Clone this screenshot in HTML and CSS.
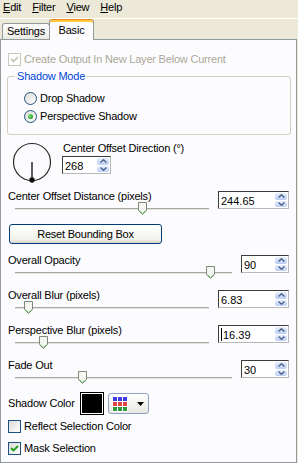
FILE: index.html
```html
<!DOCTYPE html>
<html>
<head>
<meta charset="utf-8">
<link rel="stylesheet" href="styles.css">
</head>
<body>
<div class="menubar">
  <span class="menu"><u>E</u>dit</span>
  <span class="menu"><u>F</u>ilter</span>
  <span class="menu"><u>V</u>iew</span>
  <span class="menu"><u>H</u>elp</span>
</div>
<div class="tabs">
  <div class="tab">Settings</div>
  <div class="tab active">Basic</div>
</div>
<div class="panel">
  <div class="check top disabled">
    <span class="box"><svg width="11" height="11" viewBox="0 0 11 11"><polyline points="2,5 4.5,7.5 9,3" fill="none" stroke="#CAC8BB" stroke-width="1.8"/></svg></span>
    <span>Create Output In New Layer Below Current</span>
  </div>
  <fieldset class="group">
    <legend>Shadow Mode</legend>
    <div class="radio"><span class="circle"></span><span>Drop Shadow</span></div>
    <div class="radio"><span class="circle on"></span><span>Perspective Shadow</span></div>
  </fieldset>
  <div class="dial-row">
    <svg class="dial" width="44" height="44" viewBox="0 0 44 44">
      <circle cx="22" cy="21" r="18.5" fill="none" stroke="#2a2a2a" stroke-width="1.2"/>
      <line x1="22" y1="21" x2="22" y2="39" stroke="#1a1a1a" stroke-width="1.4"/>
      <circle cx="22" cy="39" r="2.7" fill="#111"/>
    </svg>
    <div class="dial-ctl">
      <div class="label">Center Offset Direction (°)</div>
      <div class="spin dialspin">
        <span class="field">268</span>
        <span class="arrows">
          <span class="arrow"><svg width="7" height="4" viewBox="0 0 7 4"><polyline points="0.5,3.5 3.5,0.8 6.5,3.5" fill="none" stroke="#4D6185" stroke-width="1.4"/></svg></span>
          <span class="arrow"><svg width="7" height="4" viewBox="0 0 7 4"><polyline points="0.5,0.5 3.5,3.2 6.5,0.5" fill="none" stroke="#4D6185" stroke-width="1.4"/></svg></span>
        </span>
      </div>
    </div>
  </div>

  <div class="param first">
    <div class="param-main">
      <div class="label">Center Offset Distance (pixels)</div>
      <div class="slider"><div class="track"></div><svg class="thumb" style="left:123px" width="9" height="13" viewBox="0 0 9 13"><path d="M0.5 0.5H8.5V8.5L4.5 12.5L0.5 8.5Z" fill="#F6F6F2" stroke="#7D8A78"/><path d="M1.5 8.8L4.5 11.6L7.5 8.8" fill="none" stroke="#6CC16C"/></svg></div>
    </div>
    <div class="spin wide">
      <span class="field">244.65</span>
      <span class="arrows">
        <span class="arrow"><svg width="7" height="4" viewBox="0 0 7 4"><polyline points="0.5,3.5 3.5,0.8 6.5,3.5" fill="none" stroke="#4D6185" stroke-width="1.4"/></svg></span>
        <span class="arrow"><svg width="7" height="4" viewBox="0 0 7 4"><polyline points="0.5,0.5 3.5,3.2 6.5,0.5" fill="none" stroke="#4D6185" stroke-width="1.4"/></svg></span>
      </span>
    </div>
  </div>

  <button class="btn">Reset Bounding Box</button>

  <div class="param opacity">
    <div class="param-main">
      <div class="label">Overall Opacity</div>
      <div class="slider"><div class="track"></div><svg class="thumb" style="left:191px" width="9" height="13" viewBox="0 0 9 13"><path d="M0.5 0.5H8.5V8.5L4.5 12.5L0.5 8.5Z" fill="#F6F6F2" stroke="#7D8A78"/><path d="M1.5 8.8L4.5 11.6L7.5 8.8" fill="none" stroke="#6CC16C"/></svg></div>
    </div>
    <div class="spin narrow">
      <span class="field">90</span>
      <span class="arrows">
        <span class="arrow"><svg width="7" height="4" viewBox="0 0 7 4"><polyline points="0.5,3.5 3.5,0.8 6.5,3.5" fill="none" stroke="#4D6185" stroke-width="1.4"/></svg></span>
        <span class="arrow"><svg width="7" height="4" viewBox="0 0 7 4"><polyline points="0.5,0.5 3.5,3.2 6.5,0.5" fill="none" stroke="#4D6185" stroke-width="1.4"/></svg></span>
      </span>
    </div>
  </div>

  <div class="param">
    <div class="param-main">
      <div class="label">Overall Blur (pixels)</div>
      <div class="slider"><div class="track"></div><svg class="thumb" style="left:9px" width="9" height="13" viewBox="0 0 9 13"><path d="M0.5 0.5H8.5V8.5L4.5 12.5L0.5 8.5Z" fill="#F6F6F2" stroke="#7D8A78"/><path d="M1.5 8.8L4.5 11.6L7.5 8.8" fill="none" stroke="#6CC16C"/></svg></div>
    </div>
    <div class="spin wide">
      <span class="field">6.83</span>
      <span class="arrows">
        <span class="arrow"><svg width="7" height="4" viewBox="0 0 7 4"><polyline points="0.5,3.5 3.5,0.8 6.5,3.5" fill="none" stroke="#4D6185" stroke-width="1.4"/></svg></span>
        <span class="arrow"><svg width="7" height="4" viewBox="0 0 7 4"><polyline points="0.5,0.5 3.5,3.2 6.5,0.5" fill="none" stroke="#4D6185" stroke-width="1.4"/></svg></span>
      </span>
    </div>
  </div>

  <div class="param">
    <div class="param-main">
      <div class="label">Perspective Blur (pixels)</div>
      <div class="slider"><div class="track"></div><svg class="thumb" style="left:24px" width="9" height="13" viewBox="0 0 9 13"><path d="M0.5 0.5H8.5V8.5L4.5 12.5L0.5 8.5Z" fill="#F6F6F2" stroke="#7D8A78"/><path d="M1.5 8.8L4.5 11.6L7.5 8.8" fill="none" stroke="#6CC16C"/></svg></div>
    </div>
    <div class="spin wide">
      <span class="field"><span class="caret"></span>16.39</span>
      <span class="arrows">
        <span class="arrow"><svg width="7" height="4" viewBox="0 0 7 4"><polyline points="0.5,3.5 3.5,0.8 6.5,3.5" fill="none" stroke="#4D6185" stroke-width="1.4"/></svg></span>
        <span class="arrow"><svg width="7" height="4" viewBox="0 0 7 4"><polyline points="0.5,0.5 3.5,3.2 6.5,0.5" fill="none" stroke="#4D6185" stroke-width="1.4"/></svg></span>
      </span>
    </div>
  </div>

  <div class="param">
    <div class="param-main">
      <div class="label">Fade Out</div>
      <div class="slider"><div class="track"></div><svg class="thumb" style="left:63px" width="9" height="13" viewBox="0 0 9 13"><path d="M0.5 0.5H8.5V8.5L4.5 12.5L0.5 8.5Z" fill="#F6F6F2" stroke="#7D8A78"/><path d="M1.5 8.8L4.5 11.6L7.5 8.8" fill="none" stroke="#6CC16C"/></svg></div>
    </div>
    <div class="spin narrow">
      <span class="field">30</span>
      <span class="arrows">
        <span class="arrow"><svg width="7" height="4" viewBox="0 0 7 4"><polyline points="0.5,3.5 3.5,0.8 6.5,3.5" fill="none" stroke="#4D6185" stroke-width="1.4"/></svg></span>
        <span class="arrow"><svg width="7" height="4" viewBox="0 0 7 4"><polyline points="0.5,0.5 3.5,3.2 6.5,0.5" fill="none" stroke="#4D6185" stroke-width="1.4"/></svg></span>
      </span>
    </div>
  </div>

  <div class="color-row">
    <span class="sc-label">Shadow Color</span>
    <span class="swatch"></span>
    <span class="colorbtn">
      <svg width="16" height="16" viewBox="0 0 16 16">
        <rect x="0" y="0" width="16" height="16" fill="#fff"/>
        <rect x="1" y="1" width="4" height="4" fill="#3D3DE0"/><rect x="6" y="1" width="4" height="4" fill="#3D3DE0"/><rect x="11" y="1" width="4" height="4" fill="#3D3DE0"/>
        <rect x="1" y="6" width="4" height="4" fill="#E24444"/><rect x="6" y="6" width="4" height="4" fill="#E24444"/><rect x="11" y="6" width="4" height="4" fill="#E24444"/>
        <rect x="1" y="11" width="4" height="4" fill="#2F9A3C"/><rect x="6" y="11" width="4" height="4" fill="#2F9A3C"/><rect x="11" y="11" width="4" height="4" fill="#2F9A3C"/>
      </svg>
      <svg width="7" height="4" viewBox="0 0 7 4"><polygon points="0,0 7,0 3.5,4" fill="#000"/></svg>
    </span>
  </div>

  <div class="check reflect">
    <span class="box"></span>
    <span>Reflect Selection Color</span>
  </div>
  <div class="check mask">
    <span class="box"><svg width="11" height="11" viewBox="0 0 11 11"><polyline points="2,5 4.5,7.5 9,3" fill="none" stroke="#21A121" stroke-width="1.9"/></svg></span>
    <span>Mask Selection</span>
  </div>
</div>
</body>
</html>
```

FILE: styles.css
```css
html, body {
  margin: 0;
  padding: 0;
}
body {
  width: 298px;
  height: 463px;
  overflow: hidden;
  background: #ECE9D8;
  font: 11px/13px "Liberation Sans", Arial, sans-serif;
  letter-spacing: -0.2px;
  color: #000;
}

.menubar {
  height: 19px;
  box-sizing: border-box;
  display: flex;
  align-items: flex-start;
  padding: 1px 0 0 3px;
  gap: 11px;
  border-bottom: 1px solid #fff;
}
.menu u { text-decoration-thickness: 1px; text-underline-offset: 1px; }

.tabs {
  height: 20px;
  display: flex;
  align-items: flex-end;
  padding-left: 2px;
}
.tab {
  width: 48px;
  height: 16px;
  box-sizing: border-box;
  border: 1px solid #919B9C;
  border-bottom: none;
  border-radius: 3px 3px 0 0;
  background: linear-gradient(#FFFFFF, #F3F2EC 70%, #E8E7E0);
  text-align: center;
  line-height: 13px;
  padding-top: 1px;
}
.tab.active {
  width: 45px;
  height: 21px;
  margin-left: -1px;
  margin-bottom: -1px;
  position: relative;
  z-index: 1;
  background: #FCFCFE;
  border-top: 1px solid #E68B2C;
  box-shadow: inset 0 2px 0 #FFC83C;
  padding-top: 4px;
}

.panel {
  width: 297px;
  height: 424px;
  box-sizing: border-box;
  background: #FCFCFE;
  border: 1px solid #919B9C;
  padding: 0 5px 0 6px;
}

.check {
  display: flex;
  align-items: center;
  gap: 3px;
  height: 13px;
  padding-left: 1px;
}
.check.top { margin-top: 13px; }
.check.reflect { margin-top: 5px; }
.check.mask { margin-top: 9px; }
.box {
  width: 13px;
  height: 13px;
  box-sizing: border-box;
  border: 1px solid #1C5180;
  background: linear-gradient(135deg, #DCDCD7, #FFFFFF);
  display: flex;
  align-items: center;
  justify-content: center;
}
.check.disabled { color: #ACA899; }
.check.disabled .box {
  border-color: #CAC8BB;
  background: #fff;
}

.group {
  margin: 4px 0 0;
  padding: 9px 0 11px 16px;
  border: 1px solid #D0D0BF;
  border-radius: 3px;
  display: flex;
  flex-direction: column;
  gap: 5px;
  min-width: 0;
}
.group legend {
  padding: 0 2px;
  margin-left: -9px;
  color: #0046D5;
  line-height: 13px;
}
.radio {
  display: flex;
  align-items: center;
  gap: 3px;
  height: 13px;
}
.circle {
  width: 13px;
  height: 13px;
  box-sizing: border-box;
  border-radius: 50%;
  border: 1px solid #1C5180;
  background: linear-gradient(135deg, #DCDCD7, #FFFFFF);
  display: flex;
  align-items: center;
  justify-content: center;
}
.circle.on::after {
  content: "";
  width: 5px;
  height: 5px;
  border-radius: 50%;
  background: radial-gradient(circle at 35% 35%, #8CE28C, #21A121 70%);
}

.dial-row {
  display: flex;
  margin-top: 6px;
  gap: 8px;
}
.dial {
  margin-left: 3px;
  flex: none;
}
.dial-ctl { padding-top: 1px; }
.dialspin {
  width: 49px;
  margin-top: 2px;
}

.label { padding-left: 1px; white-space: nowrap; }
.param {
  display: flex;
  align-items: flex-start;
  padding-right: 2px;
  margin-top: 9px;
}
.param.first { margin-top: 5px; }
.param.opacity { margin-top: 10px; }
.param-main {
  flex: 1;
  min-width: 0;
}
.slider {
  position: relative;
  height: 14px;
  box-sizing: border-box;
  padding-top: 6px;
  margin: -1px 9px 0 8px;
}
.track {
  height: 1px;
  background: #A8A8A4;
  border-bottom: 1px solid #E4E4DE;
}
.thumb {
  position: absolute;
  top: 0;
}

.spin {
  display: flex;
  height: 18px;
  box-sizing: border-box;
  border: 1px solid;
  border-color: #3C3C3C #B8B8B8 #B8B8B8 #3C3C3C;
  background: #fff;
  margin-top: 1px;
  flex: none;
  letter-spacing: 0;
}
.spin.wide { width: 71px; }
.spin.narrow { width: 48px; }
.field {
  flex: 1;
  padding: 1px 0 0 2px;
  line-height: 14px;
  display: flex;
  align-items: center;
}
.caret {
  width: 1px;
  height: 13px;
  background: #000;
  margin-right: 1px;
}
.arrows {
  width: 14px;
  display: flex;
  flex-direction: column;
  padding: 1px;
  gap: 1px;
  box-sizing: border-box;
}
.arrow {
  flex: 1;
  display: flex;
  align-items: center;
  justify-content: center;
  background: linear-gradient(#E6EEFD, #BCCEF7);
  border-radius: 2px;
}

.btn {
  display: block;
  margin: 8px 0 0 2px;
  width: 153px;
  height: 20px;
  box-sizing: border-box;
  border: 1px solid #003C74;
  border-radius: 3px;
  background: linear-gradient(#FFFFFF, #F2F2EC 80%, #D8D3C8);
  font: inherit;
  letter-spacing: inherit;
  color: #000;
  padding: 0;
}

.color-row {
  display: flex;
  align-items: center;
  margin-top: 7px;
  padding-left: 1px;
  height: 23px;
}
.sc-label { width: 72px; }
.swatch {
  width: 24px;
  height: 23px;
  box-sizing: border-box;
  border: 1px solid #000;
  box-shadow: inset 0 0 0 1px #fff;
  background: #000;
}
.colorbtn {
  margin-left: 4px;
  width: 41px;
  height: 21px;
  box-sizing: border-box;
  border: 1px solid #8EA3C3;
  border-radius: 3px;
  background: linear-gradient(#FFFFFF, #E8E8E2);
  display: flex;
  align-items: center;
  padding-left: 3px;
  gap: 9px;
}
```
